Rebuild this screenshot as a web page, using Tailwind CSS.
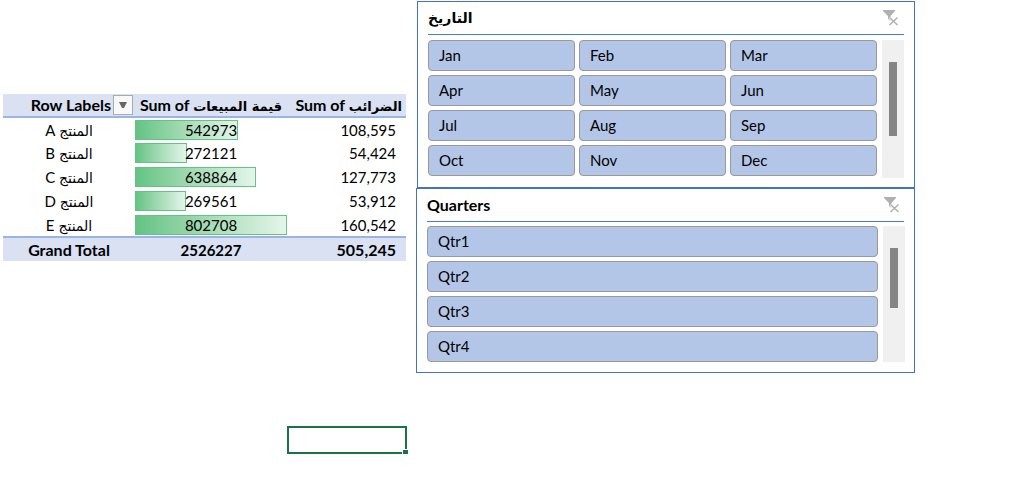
<!DOCTYPE html>
<html lang="en">
<head>
    <meta charset="UTF-8">
    <meta name="viewport" content="width=device-width, initial-scale=1">
    <title>Pivot table</title>
    <script src="https://cdn.jsdelivr.net/npm/@tailwindcss/browser@4"></script>
</head>
<body class="bg-white text-black text-[15px] leading-5 font-['Lato','DejaVu_Sans',sans-serif]">

<main class="grid grid-cols-[403fr_499fr] gap-[10px] pl-[3px] pr-[109px]">

    <!-- Pivot table -->
    <div class="flex flex-col pt-[94px] min-w-0">
        <table class="w-full table-fixed border-collapse whitespace-nowrap">
            <colgroup>
                <col class="w-[132px]">
                <col class="w-[152px]">
                <col>
            </colgroup>
            <thead class="bg-[#d9e1f2] text-[16px]">
                <tr class="h-[23px] border-b-2 border-[#9bb5e2]">
                    <th class="p-0">
                        <div class="flex items-center justify-end gap-[2px] pr-[2px]">
                            Row Labels
                            <button type="button" aria-label="Filter row labels" class="flex items-center justify-center size-5 border border-[#ababab] bg-[#f8f8f8]">
                                <svg class="w-2 h-[6px]" viewBox="0 0 8 6"><path d="M0 0h8L5 6H3z" fill="#666"/></svg>
                            </button>
                        </div>
                    </th>
                    <th class="p-0">Sum of <span lang="ar" class="font-['DejaVu_Sans'] text-[13px] leading-4">قيمة المبيعات</span></th>
                    <th class="p-0 pr-1 text-right">Sum of <span lang="ar" class="font-['DejaVu_Sans'] text-[13px] leading-4">الضرائب</span></th>
                </tr>
            </thead>
            <tbody id="rows"></tbody>
            <tfoot class="bg-[#d9e1f2] font-bold">
                <tr class="h-6 border-t-2 border-[#9bb5e2]">
                    <th class="p-0 text-[16px]">Grand Total</th>
                    <td class="p-0 text-center">2526227</td>
                    <td class="p-0 pr-[10px] text-right text-[16px]">505,245</td>
                </tr>
            </tfoot>
        </table>

        <!-- Active cell -->
        <div class="relative self-end w-[120px] -mr-px mt-[165px]">
            <input type="text" aria-label="Active cell" class="block w-full h-7 px-1 border-2 border-[#1a7343] outline-none">
            <span class="absolute -right-[2px] -bottom-[2px] size-[7px] bg-[#1a7343] border border-white"></span>
        </div>
    </div>

    <!-- Slicers -->
    <div class="flex flex-col pt-px min-w-0">
        <section class="ml-px px-[10px] pb-[9px] border border-[#4472c4]">
            <header class="flex items-center justify-between h-[33px] pr-[5px] border-b border-[#4a7ad0]">
                <h2 lang="ar" class="font-bold font-['DejaVu_Sans'] text-[14px]">التاريخ</h2>
                <button type="button" aria-label="Clear month filter">
                    <svg class="w-4 h-4" viewBox="0 0 16 16" fill="none" stroke="#b0b0b0">
                        <path d="M0 0h12v1L7.500 6v5L5 9V6L0 1z" fill="#b0b0b0" stroke="none"/>
                        <path d="M6.500 7.500l8 7.500M14.500 7.500l-8 7.500" stroke="#fff" stroke-width="3"/>
                        <path d="M6.500 7.500l8 7.500M14.500 7.500l-8 7.500" stroke-width="1.500"/>
                    </svg>
                </button>
            </header>
            <div class="flex gap-[5px] pt-[5px]">
                <div id="months" class="grid grid-cols-3 gap-1 grow pb-[2px]"></div>
                <div class="w-[22px] pt-[22px] bg-[#f0f0f0]">
                    <div class="w-2 h-[74px] mx-auto bg-[#858585]"></div>
                </div>
            </div>
        </section>

        <section class="pl-[10px] pr-[9px] pb-[10px] border border-[#4472c4]">
            <header class="flex items-center justify-between h-[33px] mr-px pr-[4px] border-b border-[#4a7ad0]">
                <h2 class="font-bold text-[16px]">Quarters</h2>
                <button type="button" aria-label="Clear quarter filter">
                    <svg class="w-4 h-4" viewBox="0 0 16 16" fill="none" stroke="#b0b0b0">
                        <path d="M0 0h12v1L7.500 6v5L5 9V6L0 1z" fill="#b0b0b0" stroke="none"/>
                        <path d="M6.500 7.500l8 7.500M14.500 7.500l-8 7.500" stroke="#fff" stroke-width="3"/>
                        <path d="M6.500 7.500l8 7.500M14.500 7.500l-8 7.500" stroke-width="1.500"/>
                    </svg>
                </button>
            </header>
            <div class="flex gap-[5px] pt-1">
                <div id="quarters" class="grid gap-1 grow"></div>
                <div class="w-[22px] pt-[22px] bg-[#f0f0f0]">
                    <div class="w-2 h-[60px] mx-auto bg-[#858585]"></div>
                </div>
            </div>
        </section>
    </div>
</main>

<script>
    const rows = [
        ['A', 542973, '108,595'],
        ['B', 272121, '54,424'],
        ['C', 638864, '127,773'],
        ['D', 269561, '53,912'],
        ['E', 802708, '160,542'],
    ];
    const max = Math.max(...rows.map(r => r[1]));

    document.getElementById('rows').innerHTML = rows.map(([name, sales, tax]) => `
        <tr class="h-6">
            <th dir="rtl" class="p-0 font-normal text-center"><span lang="ar" class="font-['DejaVu_Sans'] text-[14px] leading-4">المنتج</span> ${name}</th>
            <td class="p-0">
                <div class="grid items-center">
                    <div class="col-start-1 row-start-1 h-5 border border-[#63c384] bg-linear-to-r from-[#63c384] to-[#e4f5ea]" style="width: ${sales / max * 100}%"></div>
                    <span class="col-start-1 row-start-1 text-center">${sales}</span>
                </div>
            </td>
            <td class="p-0 pr-[10px] text-right">${tax}</td>
        </tr>`).join('');

    const item = label => `<button type="button" class="h-[31px] px-[10px] pb-[2px] text-left rounded-[4px] border border-[#999] bg-[#b4c6e7]">${label}</button>`;

    document.getElementById('months').innerHTML =
        ['Jan', 'Feb', 'Mar', 'Apr', 'May', 'Jun', 'Jul', 'Aug', 'Sep', 'Oct', 'Nov', 'Dec'].map(item).join('');
    document.getElementById('quarters').innerHTML =
        ['Qtr1', 'Qtr2', 'Qtr3', 'Qtr4'].map(item).join('');
</script>

</body>
</html>
